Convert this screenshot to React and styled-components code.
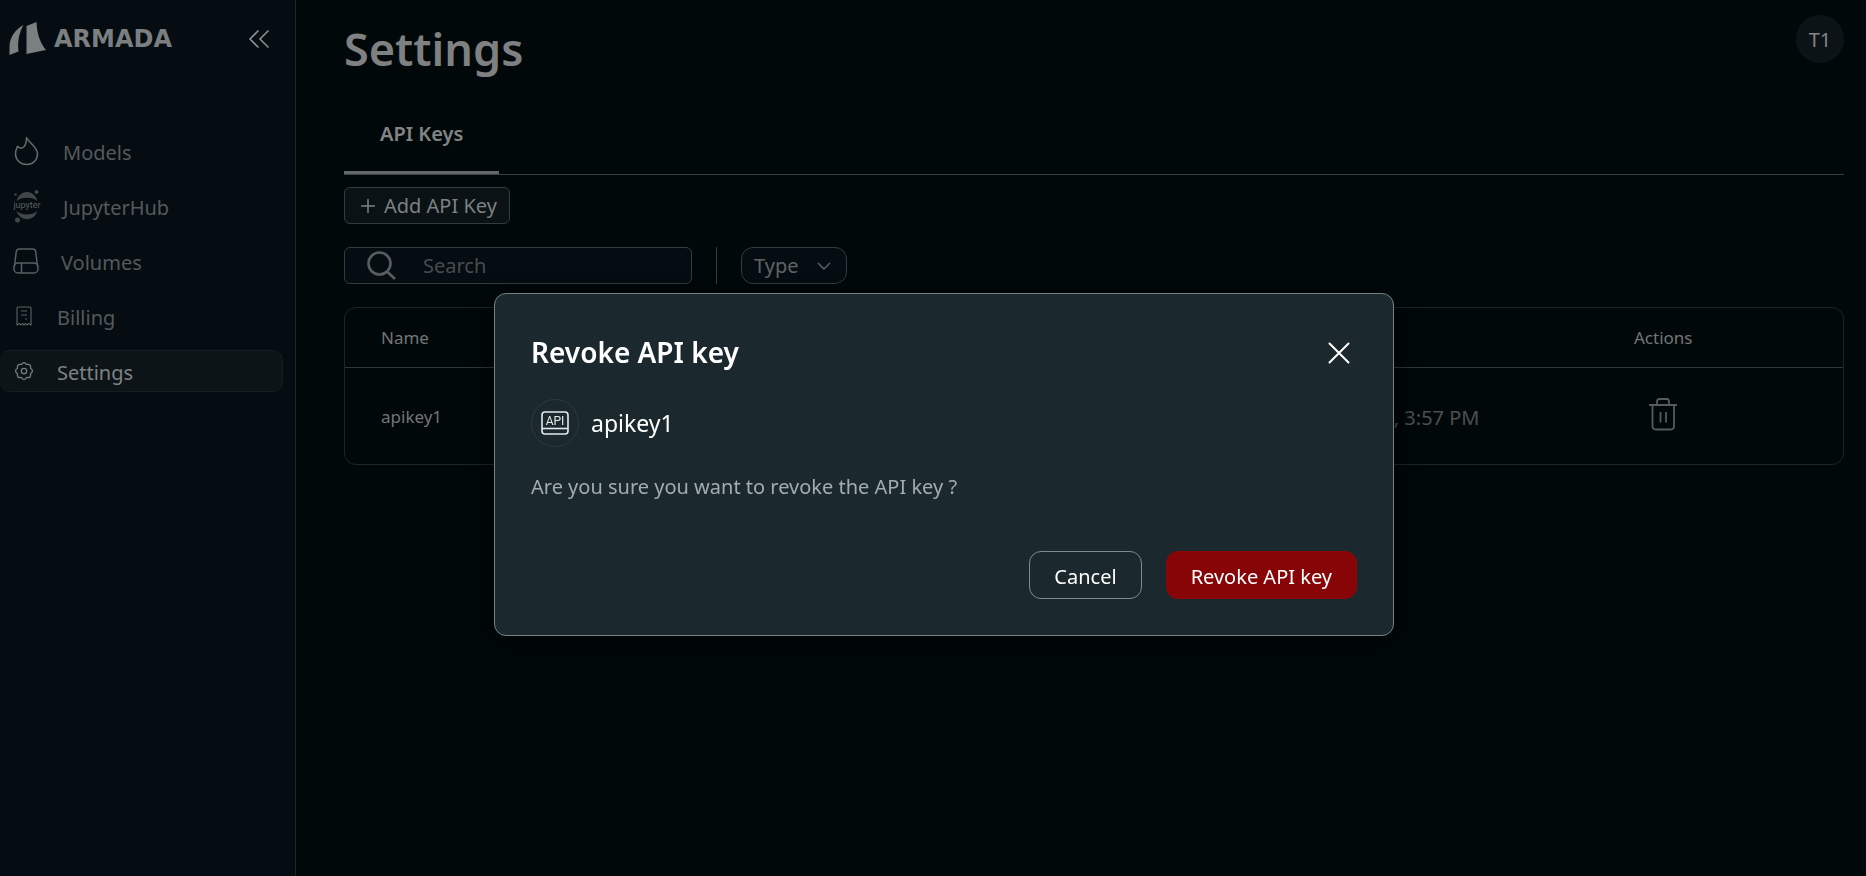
import styled, { createGlobalStyle, css } from 'styled-components';
import { useState } from 'react';

const navItems = [
    { _id: 'models', label: 'Models', Icon: FlameIcon },
    { _id: 'jupyter', label: 'JupyterHub', Icon: JupyterIcon },
    { _id: 'volumes', label: 'Volumes', Icon: DriveIcon },
    { _id: 'billing', label: 'Billing', Icon: ReceiptIcon },
    { _id: 'settings', label: 'Settings', Icon: GearIcon },
];

const apiKeys = [{ _id: 1, name: 'apikey1', type: 'User', created: '1/15/2025, 3:57 PM' }];

export default function App () {
const [search, setSearch] = useState('');
const [selected, setSelected] = useState(apiKeys[0]);

    return (
        <Page>
            <GlobalStyle />
            <Sidebar>
                <SidebarHeader>
                    <Brand href="#home">
                        <BrandMark />
                        <BrandName>ARMADA</BrandName>
                    </Brand>
                    <IconButton aria-label="Collapse menu"><CollapseIcon /></IconButton>
                </SidebarHeader>
                <Nav>
                    {navItems.map(({ _id, label, Icon }) => (
                        <NavLink key={_id} href={`#${_id}`} $isActive={_id === 'settings'}>
                            <Icon />
                            <NavLabel>{label}</NavLabel>
                        </NavLink>
                    ))}
                </Nav>
            </Sidebar>
            <Main>
                <TopBar>
                    <Title>Settings</Title>
                    <Avatar aria-label="Account">T1</Avatar>
                </TopBar>
                <Tabs role="tablist">
                    <Tab role="tab" aria-selected="true">API Keys</Tab>
                </Tabs>
                <AddButton><PlusIcon />Add API Key</AddButton>
                <Filters>
                    <SearchBox>
                        <SearchIcon />
                        <SearchInput
                            aria-label="Search"
                            placeholder="Search"
                            value={search}
                            onChange={(event) => setSearch(event.target.value)}
                        />
                    </SearchBox>
                    <Divider />
                    <SelectBox>
                        <TypeSelect aria-label="Type" defaultValue="">
                            <option value="">Type</option>
                        </TypeSelect>
                        <ChevronIcon />
                    </SelectBox>
                </Filters>
                <Table>
                    <thead>
                        <tr>
                            <HeadCell>Name</HeadCell>
                            <HeadCell>Type</HeadCell>
                            <HeadCell $width="202px">Created</HeadCell>
                            <HeadCell $width="24%" $isCentered>Actions</HeadCell>
                        </tr>
                    </thead>
                    <tbody>
                        {apiKeys.map((apiKey) => (
                            <tr key={apiKey._id}>
                                <Cell>{apiKey.name}</Cell>
                                <Cell>{apiKey.type}</Cell>
                                <Cell $isDate>{apiKey.created}</Cell>
                                <Cell $isCentered>
                                    <IconButton aria-label="Revoke" onClick={() => setSelected(apiKey)}>
                                        <TrashIcon />
                                    </IconButton>
                                </Cell>
                            </tr>
                        ))}
                    </tbody>
                </Table>
            </Main>
            {selected && (
                <Overlay>
                    <Dialog role="dialog" aria-modal="true" aria-labelledby="dialog-title">
                        <DialogHeader>
                            <DialogTitle id="dialog-title">Revoke API key</DialogTitle>
                            <IconButton aria-label="Close" onClick={() => setSelected(null)}>
                                <CloseIcon />
                            </IconButton>
                        </DialogHeader>
                        <KeyRow>
                            <KeyBadge><ApiIcon /></KeyBadge>
                            {selected.name}
                        </KeyRow>
                        <Question>Are you sure you want to revoke the API key ?</Question>
                        <DialogActions>
                            <DialogButton onClick={() => setSelected(null)}>Cancel</DialogButton>
                            <DialogButton $isDanger onClick={() => setSelected(null)}>Revoke API key</DialogButton>
                        </DialogActions>
                    </Dialog>
                </Overlay>
            )}
        </Page>
    )
}

function BrandMark () {
    return (
        <svg width="38" height="34" viewBox="0 0 38 34" fill="#7b7f80" aria-hidden="true">
            <path d="M15.5 3C7 7.5 1.500 16 1.500 24.5L1.500 33L10.500 29.500C9.500 19 11 11 15.500 3Z" />
            <path d="M18.500 4L28.500 0C29 11 31.500 20 38 28L18.500 32Z" />
        </svg>
    )
}

function CollapseIcon () {
    return (
        <svg width="22" height="20" viewBox="0 0 22 20" fill="none" stroke="#8b8f90" strokeWidth="1.6" aria-hidden="true">
            <path d="M10.500 1.500L2 10L10.500 18.500M20.500 1.500L12 10L20.500 18.500" />
        </svg>
    )
}

function FlameIcon () {
    return (
        <svg width="28" height="30" viewBox="0 0 28 30" fill="none" stroke="#666b6c" strokeWidth="1.5" strokeLinejoin="round" aria-hidden="true">
            <path d="M13.500 1.500C16 7 24.500 11 24.500 18C24.500 24 20 28.500 13.700 28.500C7.500 28.500 2.500 24 2.500 18C2.500 14.500 3.500 12.500 4.500 10.200C6 12.500 9 12.500 10.500 11.200C12.800 9.200 13.500 5.500 13.500 1.500Z" />
        </svg>
    )
}

function JupyterIcon () {
    return (
        <svg width="28" height="34" viewBox="0 0 28 34" fill="#414748" aria-hidden="true">
            <path d="M3.500 12C7 0 21 0 24.500 12C20 7.500 8 7.500 3.500 12Z" />
            <path d="M3.500 22C7 33 21 33 24.500 22C20 26.500 8 26.500 3.500 22Z" />
            <circle cx="23.500" cy="3" r="2" />
            <circle cx="2.500" cy="5.500" r="1.300" />
            <circle cx="4.500" cy="31" r="2.500" />
            <MarkText x="14" y="19" $size="9px">jupyter</MarkText>
        </svg>
    )
}

function DriveIcon () {
    return (
        <svg width="26" height="26" viewBox="0 0 26 26" fill="none" stroke="#5a6061" strokeWidth="1.5" aria-hidden="true">
            <path d="M1.500 18.500L3.200 4Q3.500 1 6.500 1H19.500Q22.500 1 22.800 4L24.500 18.500" />
            <rect x="1" y="15" width="24" height="10" rx="4" />
            <path d="M8.500 15V25" />
        </svg>
    )
}

function ReceiptIcon () {
    return (
        <svg width="22" height="22" viewBox="0 0 22 22" fill="none" stroke="#5d6364" strokeWidth="1.1" aria-hidden="true">
            <path d="M4 20V3Q4 2 5 2H17Q18 2 18 3V20L16 18.500L14 20L12.500 18.500L11 20L9.500 18.500L8 20L6 18.500Z" />
            <path d="M8 6H14M8 10H14M12 14H14" />
        </svg>
    )
}

function GearIcon () {
    return (
        <svg width="22" height="22" viewBox="0 0 22 22" fill="none" stroke="#777c7d" strokeWidth="1.3" strokeLinejoin="round" aria-hidden="true">
            <path d="M17.500 8.300Q21.400 11 17.500 13.700Q18.400 18.400 13.700 17.500Q11 21.400 8.300 17.500Q3.600 18.400 4.500 13.700Q0.600 11 4.500 8.300Q3.600 3.600 8.300 4.500Q11 0.600 13.700 4.500Q18.400 3.600 17.500 8.300Z" />
            <circle cx="11" cy="11" r="2.700" />
        </svg>
    )
}

function PlusIcon () {
    return (
        <svg width="16" height="16" viewBox="0 0 16 16" stroke="#7d8182" strokeWidth="1.5" aria-hidden="true">
            <path d="M8 1V15M1 8H15" />
        </svg>
    )
}

function SearchIcon () {
    return (
        <svg width="30" height="30" viewBox="0 0 30 30" fill="none" stroke="#585e5f" strokeWidth="2.6" aria-hidden="true">
            <circle cx="12.500" cy="12.500" r="11" />
            <path d="M20 20.500L28 28" />
        </svg>
    )
}

function ChevronIcon () {
    return (
        <svg width="14" height="8" viewBox="0 0 14 8" fill="none" stroke="#5f6566" strokeWidth="1.4" aria-hidden="true">
            <path d="M1 1L7 7L13 1" />
        </svg>
    )
}

function TrashIcon () {
    return (
        <svg width="30" height="34" viewBox="0 0 30 34" fill="none" stroke="#565c5d" strokeWidth="1.8" aria-hidden="true">
            <path d="M1 8H29M9 8V4.500Q9 2 11.500 2H18.500Q21 2 21 4.500V8M4.500 8V29Q4.500 32.500 8 32.500H22.500Q26 32.500 26 29V8M12.500 15V25.500M18 15V25.500" />
        </svg>
    )
}

function CloseIcon () {
    return (
        <svg width="22" height="22" viewBox="0 0 22 22" stroke="#ffffff" strokeWidth="2" strokeLinecap="round" aria-hidden="true">
            <path d="M1.500 1.500L20.500 20.500M20.500 1.500L1.500 20.500" />
        </svg>
    )
}

function ApiIcon () {
    return (
        <svg width="28" height="24" viewBox="0 0 28 24" fill="none" stroke="#e3eaea" strokeWidth="1.6" aria-hidden="true">
            <rect x="1" y="1" width="26" height="22" rx="3" />
            <path d="M1 17.500H27" />
            <MarkText x="14" y="13.500" $size="12px" $isLight>API</MarkText>
        </svg>
    )
}

const GlobalStyle = createGlobalStyle`
body {
    margin: 0;
    background: #010809;
}

* {
    box-sizing: border-box;
}

body, button, input, select {
    font-family: 'Noto Sans', sans-serif;
}
`

const Page = styled.div`
display: flex;
min-height: 100vh;
font-size: 20px;
`

const Sidebar = styled.aside`
width: 296px;
flex-shrink: 0;
background: #050c12;
border-right: 1px solid #1f2627;
`

const SidebarHeader = styled.div`
display: flex;
justify-content: space-between;
align-items: center;
height: 78px;
padding: 0 25px 0 8px;
`

const Brand = styled.a`
display: flex;
align-items: center;
gap: 8px;
text-decoration: none;
`

const BrandName = styled.span`
color: #7b7f80;
font-family: 'DejaVu Sans', sans-serif;
font-size: 24px;
font-weight: 700;
line-height: 30px;
`

const IconButton = styled.button`
display: inline-flex;
background: none;
border: none;
padding: 0;
`

const Nav = styled.nav`
display: grid;
gap: 13px;
margin-top: 52px;
padding-right: 12px;
`

const NavLink = styled.a`
display: flex;
align-items: center;
gap: 22px;
height: 42px;
padding-left: 13px;
border: 1px solid transparent;
border-left: none;
border-radius: 10px;
color: #545a5b;
text-decoration: none;

${(props) =>
    props.$isActive &&
    css`
      background: #0c1418;
      border-color: #141d1f;
      color: #7f8384;
    `}
`

const NavLabel = styled.span`
padding-top: 3px;
`

const Main = styled.main`
flex: 1;
min-width: 0;
padding: 15px 22px 0 48px;
`

const TopBar = styled.header`
display: flex;
justify-content: space-between;
`

const Title = styled.h1`
margin: 0;
color: #7e8081;
font-size: 45px;
font-weight: 600;
line-height: 68px;
`

const Avatar = styled.button`
width: 48px;
height: 48px;
padding: 0;
border: none;
border-radius: 50%;
background: #0b1316;
color: #858584;
font-size: 20px;
`

const Tabs = styled.div`
display: flex;
margin-top: 10px;
border-bottom: 1px solid #3a4142;
`

const Tab = styled.button`
height: 81px;
padding: 3px 36px 0;
border: none;
border-bottom: 3px solid #626869;
background: none;
color: #818586;
font-size: 20px;
font-weight: 600;
`

const AddButton = styled.button`
display: flex;
align-items: center;
gap: 8px;
height: 37px;
margin-top: 12px;
padding: 0 12px 0 15px;
border: 1px solid #343c3d;
border-radius: 6px;
background: #0a1215;
color: #7d8182;
font-size: 20px;
`

const Filters = styled.div`
display: flex;
gap: 24px;
margin-top: 23px;
`

const SearchBox = styled.div`
display: flex;
align-items: center;
gap: 26px;
width: 348px;
height: 37px;
padding-left: 22px;
border: 1px solid #343c3d;
border-radius: 6px;
background: #050c12;
`

const SearchInput = styled.input`
flex: 1;
min-width: 0;
padding: 0;
border: none;
outline: none;
background: none;
color: #7d8182;
font-size: 20px;

&::placeholder {
    color: #474d4e;
}
`

const Divider = styled.div`
width: 1px;
background: #343c3d;
`

const SelectBox = styled.div`
display: grid;
align-items: center;
width: 106px;

> * {
    grid-area: 1 / 1;
}

svg {
    justify-self: end;
    margin-right: 16px;
    pointer-events: none;
}
`

const TypeSelect = styled.select`
appearance: none;
height: 37px;
padding: 0 12px;
border: 1px solid #343c3d;
border-radius: 12px;
background: #050c12;
color: #5f6566;
font-size: 20px;
`

const Table = styled.table`
width: 100%;
margin-top: 23px;
table-layout: fixed;
border: 1px solid #1d2526;
border-radius: 12px;
border-spacing: 0;
color: #727677;
font-size: 17px;
`

const HeadCell = styled.th`
width: ${(props) => props.$width || 'auto'};
height: 60px;
padding: 0 ${(props) => (props.$width ? '0' : '36px')};
border-bottom: 1px solid #2f3738;
font-weight: 400;
text-align: ${(props) => (props.$isCentered ? 'center' : 'left')};
`

const Cell = styled.td`
height: 96px;
padding: 0 ${(props) => (props.$isCentered ? '0' : '36px')};
text-align: ${(props) => (props.$isCentered ? 'center' : 'left')};

${(props) =>
    props.$isDate &&
    css`
      padding: 2px 4px 0 0;
      color: #4b5051;
      font-size: 20px;
      text-align: right;
      white-space: nowrap;
    `}
`

const Overlay = styled.div`
display: flex;
align-items: center;
justify-content: center;
position: fixed;
inset: 0;
padding: 53px 0 0 22px;
`

const Dialog = styled.section`
width: 900px;
padding: 36px;
border: 1px solid #758283;
border-radius: 12px;
background: #1b292e;
box-shadow: 0 6px 24px rgba(0, 0, 0, 0.6);
`

const DialogHeader = styled.div`
display: flex;
justify-content: space-between;
align-items: center;
padding-right: 7px;
`

const DialogTitle = styled.h2`
margin: 0;
color: #ffffff;
font-size: 28px;
font-weight: 600;
line-height: 45px;
`

const KeyRow = styled.div`
display: flex;
align-items: center;
gap: 12px;
margin-top: 24px;
color: #ffffff;
font-size: 23px;
`

const KeyBadge = styled.span`
display: grid;
place-items: center;
width: 48px;
height: 48px;
border: 1px solid #2c3a3e;
border-radius: 50%;
`

const Question = styled.p`
margin: 24px 0 0;
color: #a3acad;
font-size: 20px;
line-height: 32px;
`

const DialogActions = styled.div`
display: flex;
justify-content: flex-end;
gap: 24px;
margin-top: 48px;
`

const DialogButton = styled.button`
height: 48px;
padding: 2px 24px 0;
border: 1px solid ${(props) => (props.$isDanger ? '#8b0809' : '#7e8a8b')};
border-radius: 12px;
background: ${(props) => (props.$isDanger ? '#880507' : 'none')};
color: #ffffff;
font-size: 20px;
`

const MarkText = styled.text`
fill: ${(props) => (props.$isLight ? '#e3eaea' : '#5a6061')};
stroke: none;
font-family: Roboto, sans-serif;
font-size: ${(props) => props.$size};
text-anchor: middle;
`
